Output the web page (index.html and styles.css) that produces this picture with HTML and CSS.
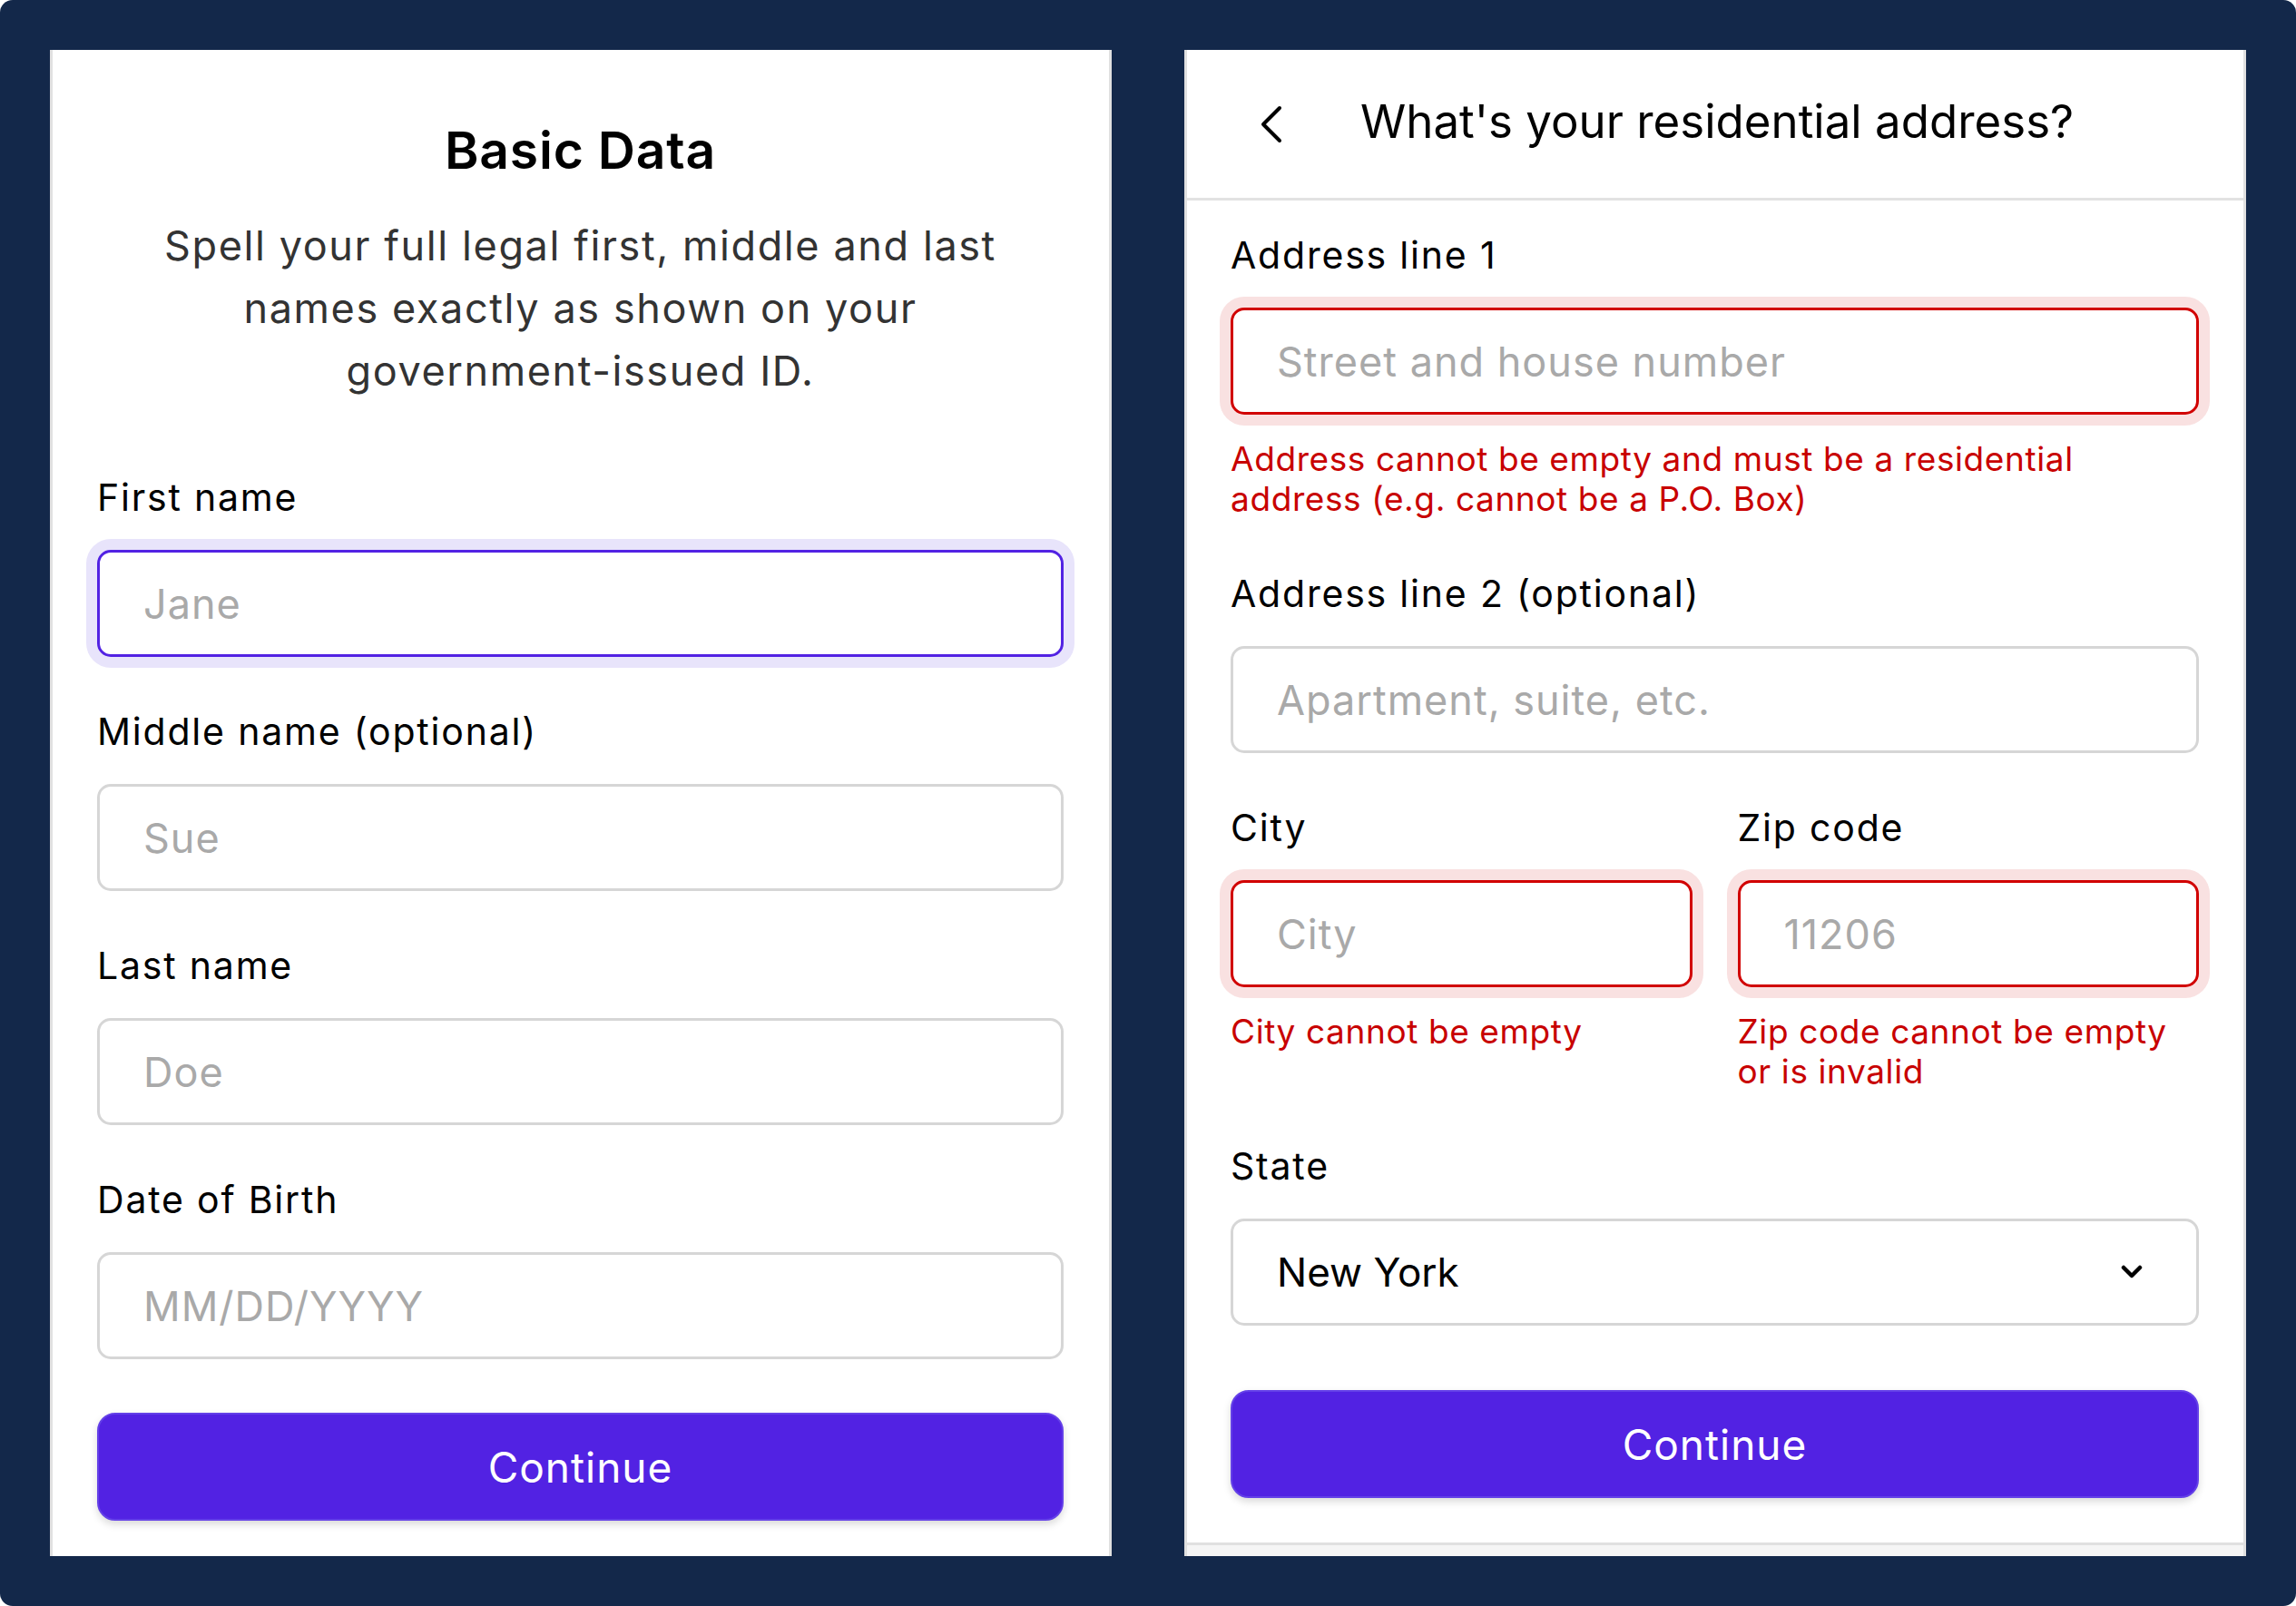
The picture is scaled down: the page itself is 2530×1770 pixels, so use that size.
FILE: index.html
```html
<!DOCTYPE html>
<html>
<head>
    <link rel="stylesheet" href="styles.css">
</head>
<body>
    <div class="frame">
        <div class="panel">
            <form class="form">
                <h1 class="titulo">Basic Data</h1>
                <p class="subtitulo">Spell your full legal first, middle and last names exactly as shown on your government-issued ID.</p>

                <div class="campo">
                    <label for="firstName">First name</label>
                    <input type="text" id="firstName" class="foco" placeholder="Jane">
                </div>
                <div class="campo">
                    <label for="middleName">Middle name (optional)</label>
                    <input type="text" id="middleName" placeholder="Sue">
                </div>
                <div class="campo">
                    <label for="lastName">Last name</label>
                    <input type="text" id="lastName" placeholder="Doe">
                </div>
                <div class="campo">
                    <label for="dob">Date of Birth</label>
                    <input type="text" id="dob" placeholder="MM/DD/YYYY">
                </div>

                <button type="button" class="botao">Continue</button>
            </form>
        </div>

        <div class="panel">
            <div class="cabecalho">
                <button type="button" class="voltar">
                    <svg width="26" height="42" viewBox="0 0 26 42">
                        <polyline points="22,3 4,21 22,39" fill="none" stroke="#000" stroke-width="4" stroke-linecap="round" stroke-linejoin="round"/>
                    </svg>
                </button>
                <h2>What's your residential address?</h2>
            </div>

            <form class="form form-endereco">
                <div class="campo">
                    <label for="linha1">Address line 1</label>
                    <input type="text" id="linha1" class="erro" placeholder="Street and house number">
                    <span class="msg-erro">Address cannot be empty and must be a residential address (e.g. cannot be a P.O. Box)</span>
                </div>
                <div class="campo">
                    <label for="linha2">Address line 2 (optional)</label>
                    <input type="text" id="linha2" placeholder="Apartment, suite, etc.">
                </div>
                <div class="linha-dupla">
                    <div class="campo">
                        <label for="cidade">City</label>
                        <input type="text" id="cidade" class="erro" placeholder="City">
                        <span class="msg-erro">City cannot be empty</span>
                    </div>
                    <div class="campo">
                        <label for="cep">Zip code</label>
                        <input type="text" id="cep" class="erro" placeholder="11206">
                        <span class="msg-erro">Zip code cannot be empty or is invalid</span>
                    </div>
                </div>
                <div class="campo">
                    <label for="estado">State</label>
                    <div class="select-box">
                        <select id="estado">
                            <option>New York</option>
                        </select>
                        <svg class="seta" width="24" height="16" viewBox="0 0 24 16">
                            <polyline points="3,3 12,12 21,3" fill="none" stroke="#000" stroke-width="4.5" stroke-linecap="round" stroke-linejoin="round"/>
                        </svg>
                    </div>
                </div>

                <button type="button" class="botao botao-endereco">Continue</button>
            </form>
            <div class="rodape"></div>
        </div>
    </div>
</body>
</html>
```

FILE: styles.css
```css
body {
    font-family: Inter, "Noto Sans", sans-serif;
    background-color: #fff;
    margin: 0;
    padding: 0;
}
.frame {
    width: 2530px;
    height: 1770px;
    box-sizing: border-box;
    background-color: #13284a;
    border-radius: 14px;
    padding: 55px;
    display: flex;
    gap: 80px;
}
.panel {
    width: 1170px;
    box-sizing: border-box;
    background-color: #fff;
    border-left: 3px solid #e0e0e0;
    border-right: 3px solid #e0e0e0;
    display: flex;
    flex-direction: column;
}
.form {
    display: flex;
    flex-direction: column;
    padding: 78px 50px 0 49px;
}
.titulo {
    font-size: 57px;
    font-weight: 600;
    letter-spacing: 0.8px;
    line-height: 66px;
    text-align: center;
    margin: 0;
    color: #000;
}
.subtitulo {
    font-size: 45px;
    letter-spacing: 1.6px;
    line-height: 69px;
    text-align: center;
    color: #333;
    margin: 37px 40px 82px;
}
.campo {
    display: flex;
    flex-direction: column;
    margin-bottom: 59px;
    min-width: 0;
}
label {
    font-size: 41px;
    letter-spacing: 1.8px;
    line-height: 46px;
    color: #000;
    margin-bottom: 35px;
}
input[type="text"], select {
    width: 100%;
    min-width: 0;
    height: 118px;
    box-sizing: border-box;
    border: 3px solid #d6d6d6;
    border-radius: 15px;
    padding: 0 48px;
    font-family: inherit;
    font-size: 45px;
    letter-spacing: 1px;
    color: #000;
    background-color: #fff;
    outline: none;
}
input::placeholder {
    color: #a9a9a9;
}
input.foco {
    border-color: #5222e3;
    box-shadow: 0 0 0 12px #e8e4fb;
}
input.erro {
    border-color: #d10000;
    box-shadow: 0 0 0 12px #f9e1e1;
}
.msg-erro {
    font-size: 37px;
    letter-spacing: 0.6px;
    line-height: 44px;
    color: #c80000;
    margin-top: 27px;
}
.botao {
    height: 119px;
    background-color: #5222e3;
    border: 2px solid #6440e8;
    border-radius: 20px;
    color: #fff;
    font-family: inherit;
    font-size: 46px;
    letter-spacing: 1px;
    cursor: pointer;
    box-shadow: 0 4px 8px rgba(0, 0, 0, 0.15);
}
.cabecalho {
    height: 163px;
    border-bottom: 3px solid #e2e2e2;
    display: flex;
    align-items: center;
    padding-left: 80px;
}
.voltar {
    background: none;
    border: none;
    padding: 0;
    margin-right: 85px;
    display: flex;
}
.cabecalho h2 {
    font-size: 51px;
    font-weight: 400;
    margin: 0 0 7px;
    color: #000;
}
.form-endereco {
    padding: 37px 49px 0 48px;
    flex: 1;
}
.linha-dupla {
    display: grid;
    grid-template-columns: minmax(0, 1fr) minmax(0, 1fr);
    gap: 50px;
}
.select-box {
    position: relative;
    display: flex;
    flex-direction: column;
}
select {
    appearance: none;
    -webkit-appearance: none;
    letter-spacing: 0;
    font-size: 44px;
}
.seta {
    position: absolute;
    right: 62px;
    top: 51px;
}
.botao-endereco {
    margin-top: 12px;
}
.rodape {
    height: 12px;
    border-top: 3px solid #e0e0e0;
    background-color: #f5f5f5;
}
```
